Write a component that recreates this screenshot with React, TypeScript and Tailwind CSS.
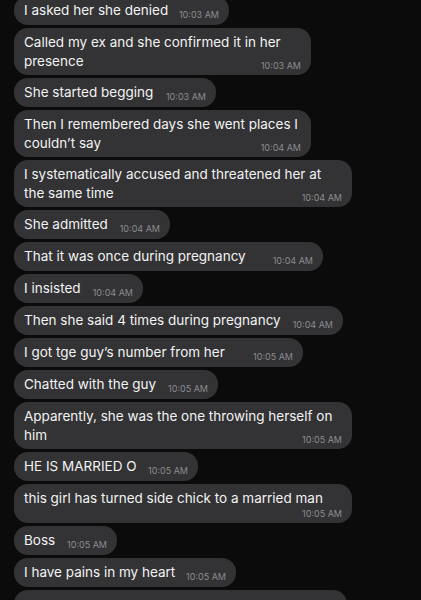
type Msg = {
  lines: string[];
  time: string;
  w: string;
};

const messages: Msg[] = [
  { lines: ["I asked her she denied"], time: "10:03 AM", w: "w-[215px]" },
  { lines: ["Called my ex and she confirmed it in her", "presence"], time: "10:03 AM", w: "w-[297px]" },
  { lines: ["She started begging"], time: "10:03 AM", w: "w-[202px]" },
  { lines: ["Then I remembered days she went places I", "couldn’t say"], time: "10:04 AM", w: "w-[297px]" },
  { lines: ["I systematically accused and threatened her at", "the same time"], time: "10:04 AM", w: "w-[338px]" },
  { lines: ["She admitted"], time: "10:04 AM", w: "w-[156px]" },
  { lines: ["That it was once during pregnancy"], time: "10:04 AM", w: "w-[309px]" },
  { lines: ["I insisted"], time: "10:04 AM", w: "w-[129px]" },
  { lines: ["Then she said 4 times during pregnancy"], time: "10:04 AM", w: "w-[329px]" },
  { lines: ["I got tge guy’s number from her"], time: "10:05 AM", w: "w-[289px]" },
  { lines: ["Chatted with the guy"], time: "10:05 AM", w: "w-[204px]" },
  { lines: ["Apparently, she was the one throwing herself on", "him"], time: "10:05 AM", w: "w-[338px]" },
  { lines: ["HE IS MARRIED O"], time: "10:05 AM", w: "w-[184px]" },
  { lines: ["this girl has turned side chick to a married man", ""], time: "10:05 AM", w: "w-[338px]" },
  { lines: ["Boss"], time: "10:05 AM", w: "w-[103px]" },
  { lines: ["I have pains in my heart"], time: "10:05 AM", w: "w-[222px]" },
];

function Bubble({ msg }: { msg: Msg }) {
  const last = msg.lines[msg.lines.length - 1];
  const before = msg.lines.slice(0, -1);
  return (
    <div className={`${msg.w} rounded-[14px] bg-[#333335] pl-[10px] pr-[10px] pt-[5px] ${before.length ? "pb-[4px]" : "pb-[5px]"}`}>
      {before.map((line) => (
        <div key={line} className="text-[13.5px] leading-[19px] text-[#f2f2f2] whitespace-nowrap">
          {line}
        </div>
      ))}
      <div className="flex items-end justify-between">
        <span className="text-[13.5px] leading-[19px] text-[#f2f2f2] whitespace-nowrap">{last}</span>
        <span className="text-[9px] leading-[12px] text-[#8c8c90] whitespace-nowrap -mb-[1px]">{msg.time}</span>
      </div>
    </div>
  );
}

export default function App() {
  return (
    <div className="h-[600px] overflow-hidden bg-[#0b0b0b] font-['Inter',sans-serif]">
      <div className="-mt-[4px] flex flex-col gap-[3px] pl-[14px]">
        {messages.map((m, i) => (
          <Bubble key={i} msg={m} />
        ))}
        <div className="h-[47px] w-[333px] rounded-[14px] bg-[#333335]" />
      </div>
    </div>
  );
}
